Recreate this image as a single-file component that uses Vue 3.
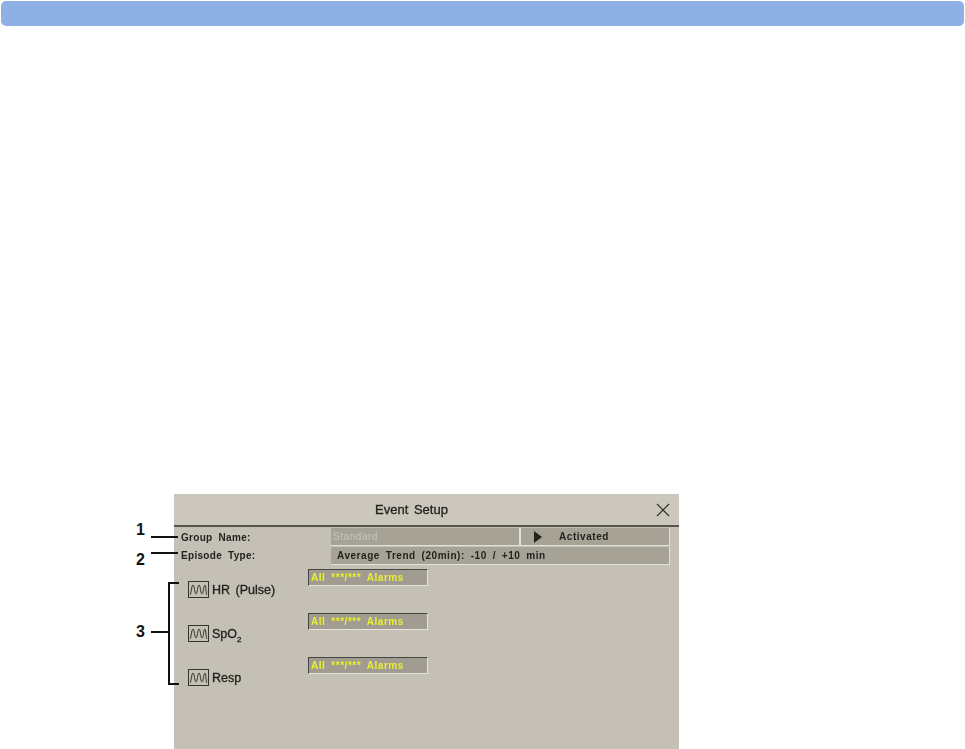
<template>
  <div class="page">
    <div class="topbar"></div>
    <div class="figure">
      <div class="dialog">
        <div class="title">
          <span>Event Setup</span>
          <svg class="close" width="14" height="14" viewBox="0 0 14 14">
            <path d="M1 1 L13 13 M13 1 L1 13" stroke="#2b2b28" stroke-width="1.1" fill="none" />
          </svg>
        </div>
        <div class="settings">
          <div class="label">Group Name:</div>
          <div class="field muted">Standard</div>
          <div class="field state">
            <span class="arrow"></span>
            <span>Activated</span>
          </div>
          <div class="label second">Episode Type:</div>
          <div class="field wide">Average Trend (20min): -10 / +10 min</div>
        </div>
        <div class="params">
          <div v-for="p in params" :key="p.name" class="param">
            <div class="name">
              <svg class="wave" width="21" height="17" viewBox="0 0 21 17">
                <rect x="0.5" y="0.5" width="20" height="16" fill="none" stroke="#33332f" />
                <path :d="wavePath" fill="none" stroke="#33332f" />
              </svg>
              <span>{{ p.name }}<sub v-if="p.sub">{{ p.sub }}</sub></span>
            </div>
            <div class="alarm">All ***/*** Alarms</div>
          </div>
        </div>
      </div>

      <div class="callout one"><b>1</b><i></i></div>
      <div class="callout two"><b>2</b><i></i></div>
      <div class="callout three"><b>3</b><i></i></div>
      <div class="bracket"></div>
    </div>
  </div>
</template>

<script setup>
const params = [
  { name: 'HR (Pulse)' },
  { name: 'SpO', sub: '2' },
  { name: 'Resp' }
]
const wavePath = 'M2 14 C3 14 3.5 4 5 4 C6.5 4 6.5 13 8 13 C9.5 13 9.5 4 11 4 C12.5 4 12.5 13 14 13 C15.5 13 15.5 4 17 4 C18 4 18 14 19 14'
</script>

<style scoped>
.page { width: 965px; height: 749px; background: #fff; overflow: hidden; font-family: "Liberation Sans", Arial, sans-serif; }
.topbar { height: 25px; margin: 1px 1px 0; background: #8eb0e2; border-radius: 5px; }
.figure { position: relative; width: 505px; height: 255px; margin: 468px 0 0 174px; }

.dialog { height: 100%; background: #c5c0b5; filter: blur(0.35px); color: #22221f; }
.title { position: relative; height: 31px; padding-right: 30px; border-bottom: 2px solid #55534c; background: #cbc7bd; display: flex; align-items: center; justify-content: center; font-size: 13px; word-spacing: 2px; -webkit-text-stroke: 0.3px #22221f; }
.close { position: absolute; right: 9px; top: 9px; }

.settings { display: grid; grid-template-columns: 150px 190px 149px; grid-template-rows: 18px 18px; row-gap: 1px; padding: 1px 0 0 7px; font-size: 10px; font-weight: 700; letter-spacing: 0.55px; word-spacing: 2.5px; }
.label { display: flex; align-items: center; letter-spacing: 0.3px; word-spacing: 3px; }
.label.second { margin-top: -2px; }
.field { display: flex; align-items: center; background: #a6a296; border-right: 1px solid #e3e0d8; border-bottom: 1px solid #e3e0d8; padding-left: 6px; }
.field.muted { color: #c9c6bd; font-weight: 400; border-right: 2px solid #e3e0d8; padding-left: 2px; }
.field.state { position: relative; justify-content: center; padding-right: 28px; }
.field.wide { grid-column: 2 / 4; }
.arrow { position: absolute; left: 13px; top: 3px; border-style: solid; border-width: 6px 0 6px 8px; border-color: transparent transparent transparent #22221f; }

.params { padding-top: 4px; }
.param { display: flex; height: 44px; padding-left: 14px; }
.name { display: flex; align-items: center; gap: 3px; width: 120px; height: 17px; margin-top: 12px; font-size: 12.5px; -webkit-text-stroke: 0.3px #22221f; word-spacing: 2px; }
.name sub { font-size: 8px; line-height: 0; }
.wave { flex: none; }
.alarm { width: 120px; height: 17px; box-sizing: border-box; background: #a09c91; border: 1px solid; border-color: #47453f #e8e5dd #e8e5dd #47453f; color: #e9f02c; font-size: 10px; font-weight: 700; line-height: 15px; padding-left: 2px; letter-spacing: 0.55px; word-spacing: 2.5px; }

.callout { position: absolute; display: flex; align-items: center; color: #111; font-size: 16px; height: 18px; }
.callout b { width: 15px; }
.callout i { display: block; height: 2px; background: #111; }
.callout.one { left: -38px; top: 27px; }
.callout.one i { width: 27px; margin-top: 13px; }
.callout.two { left: -38px; top: 57px; }
.callout.two i { width: 27px; margin-top: -15px; }
.callout.three { left: -38px; top: 129px; }
.callout.three i { width: 18px; }
.bracket { position: absolute; left: -6px; top: 88px; width: 9px; height: 99px; border: solid #111; border-width: 2px 0 2px 2px; }
</style>

<style>
body { margin: 0; background: #fff; }
</style>
